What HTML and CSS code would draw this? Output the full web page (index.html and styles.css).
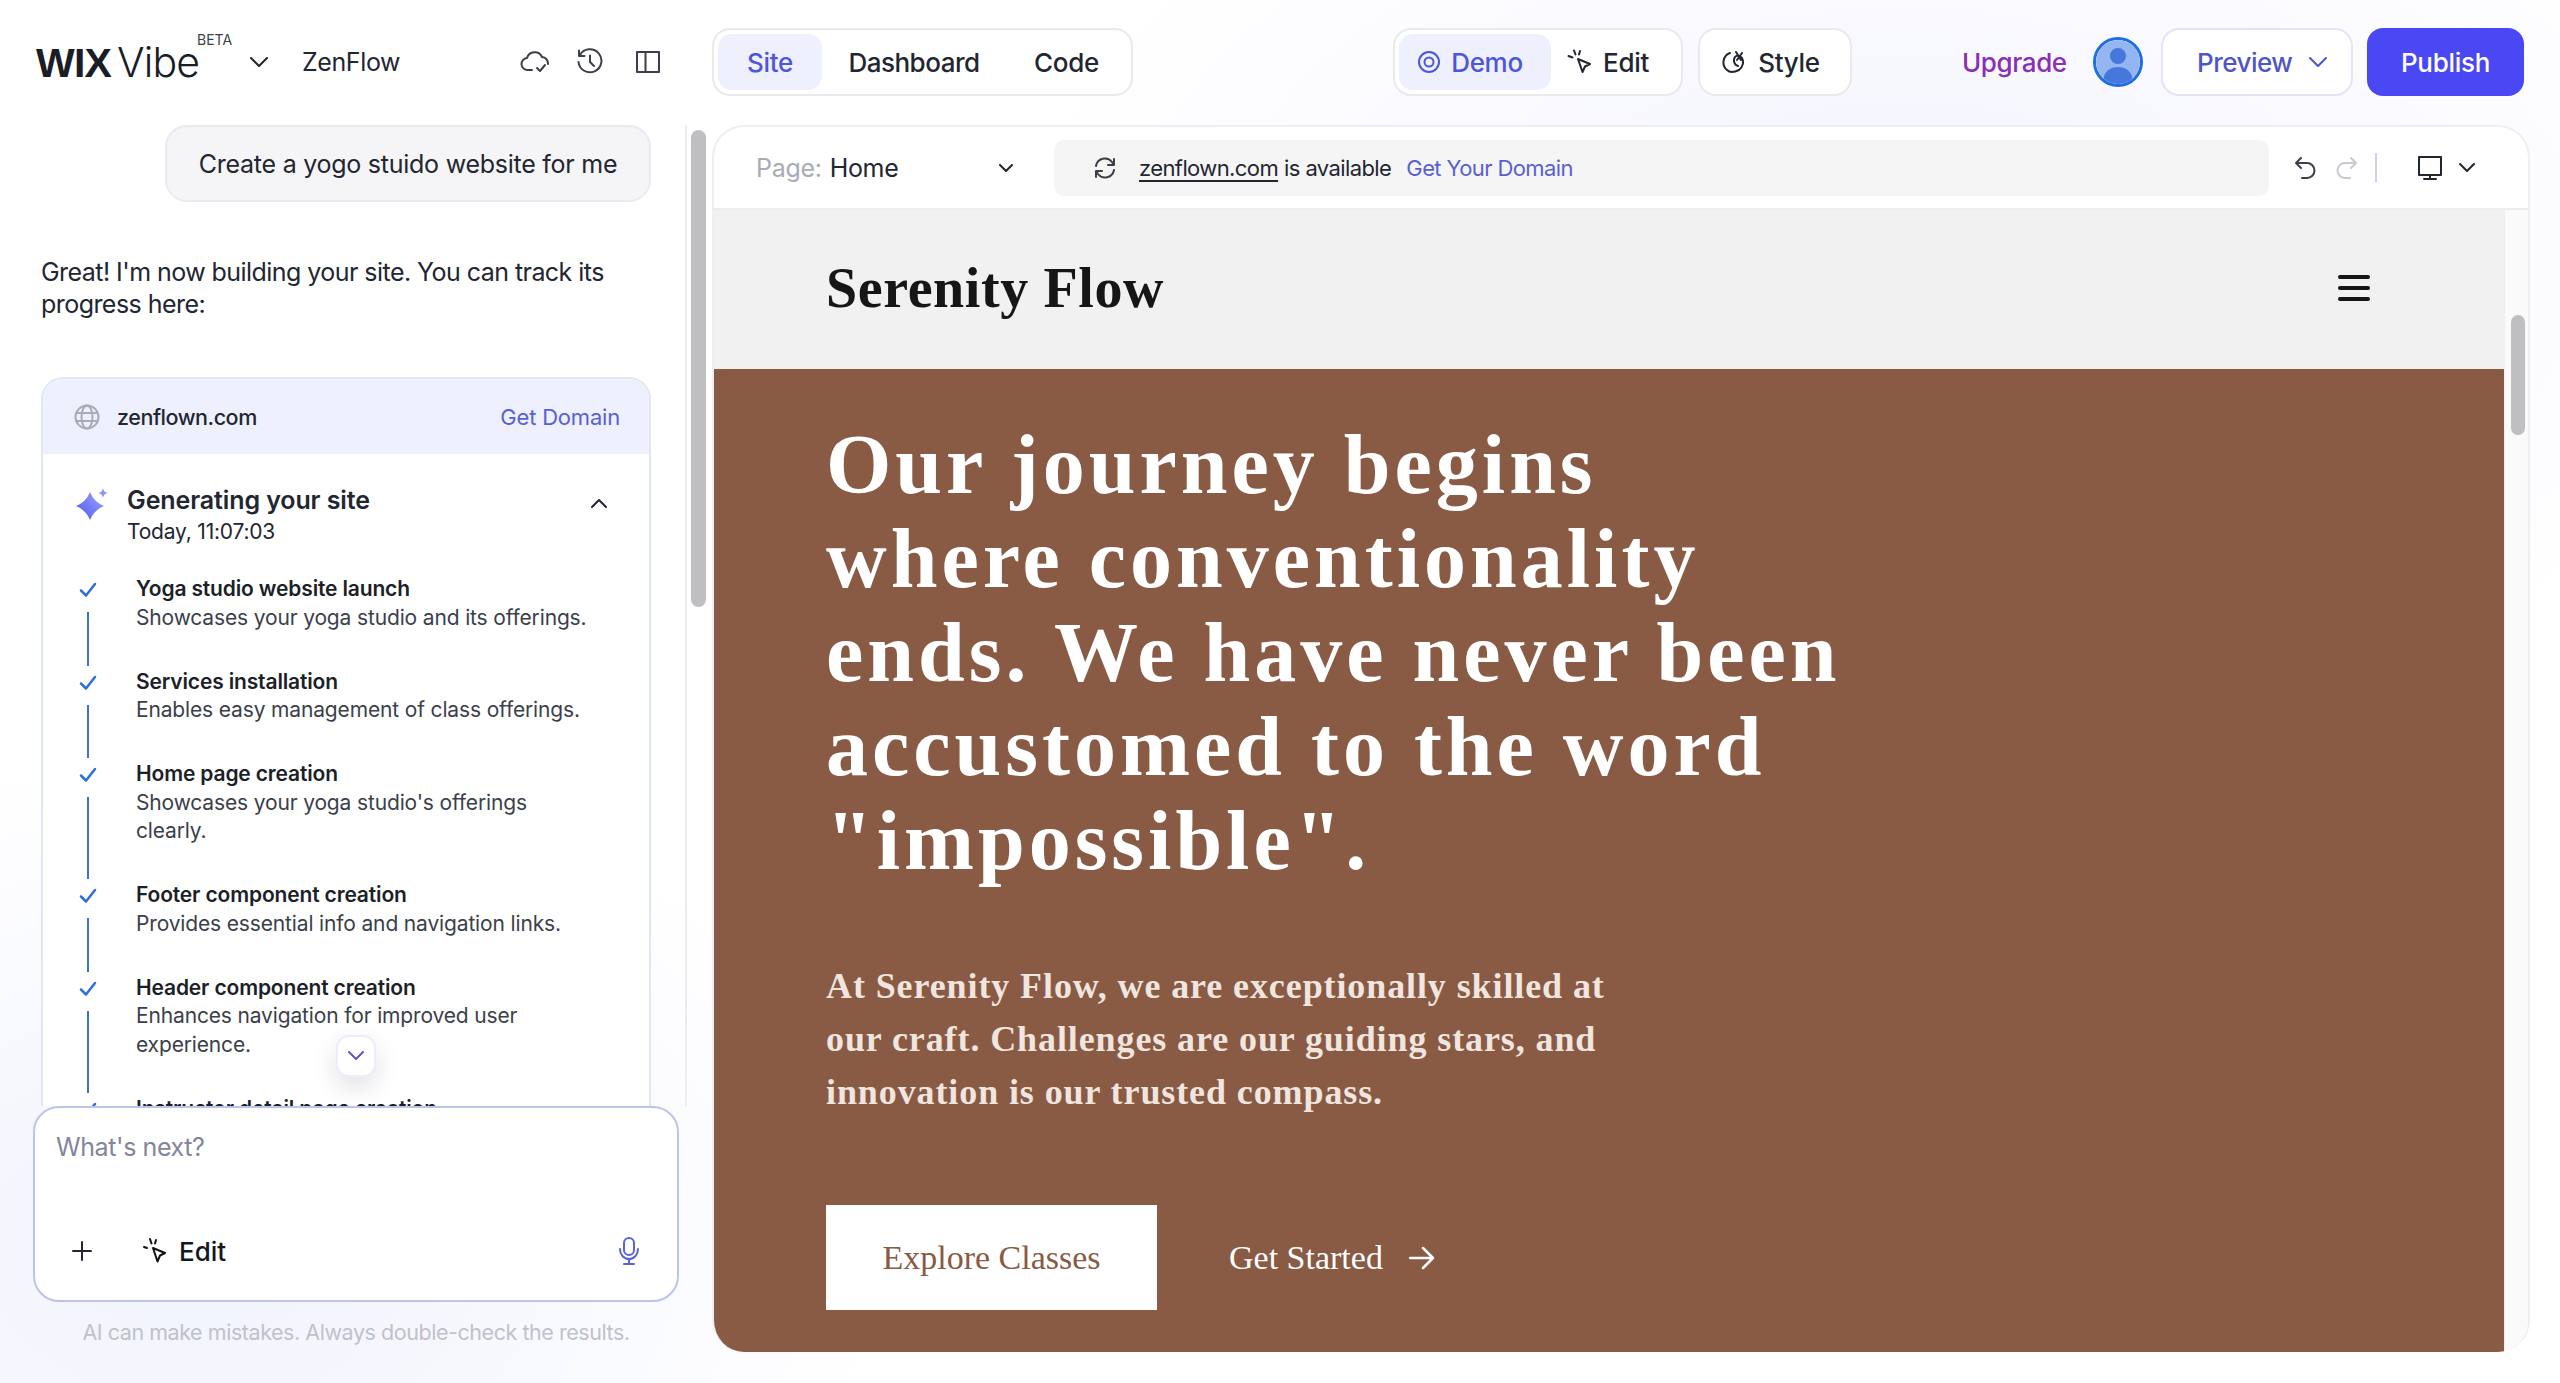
FILE: index.html
```html
<!DOCTYPE html>
<html lang="en">
  <head>
    <meta charset="UTF-8" />
    <meta name="viewport" content="width=device-width, initial-scale=1.0" />
    <title>ZenFlow - Wix Vibe</title>
    <link rel="stylesheet" href="styles.css">
  </head>

  <body>
    <header class="topbar">
      <div class="brand">
        <span class="logo-wix">WIX</span><span class="logo-vibe">Vibe</span><span class="logo-beta">BETA</span>
      </div>
      <svg class="brand-chevron" width="18" height="10" viewBox="0 0 18 10"><path d="M1 1l8 8 8-8" class="line" stroke="#222631" /></svg>
      <span class="project-name">ZenFlow</span>
      <div class="project-icons">
        <svg width="30" height="26" viewBox="0 0 30 26"><path d="M12 21H8a6 6 0 0 1-1-12 8 8 0 0 1 15-1 6.500 6.500 0 0 1 6 7" class="line" stroke="#3b3f4a" /><path d="M17 19l3 3 5-6" class="line" stroke="#3b3f4a" /></svg>
        <svg class="history-icon" width="28" height="28" viewBox="0 0 28 28"><path d="M4 7a11.500 11.500 0 1 1-1.500 7M3 2.500V8h5.500M14 7.500V14l4 4" class="line" stroke="#3b3f4a" /></svg>
        <svg width="24" height="24" viewBox="0 0 24 24"><path d="M1 2h22v20H1zM9.500 2v20" class="line" stroke="#3b3f4a" /></svg>
      </div>

      <nav class="pill-group tabs">
        <a class="pill-item active tab-site">Site</a>
        <a class="pill-item tab-dashboard">Dashboard</a>
        <a class="pill-item tab-code">Code</a>
      </nav>

      <div class="pill-group modes">
        <a class="pill-item active mode-demo">
          <svg width="24" height="24" viewBox="0 0 24 24"><circle cx="12" cy="12" r="10" class="line" stroke="#4f55d8" /><circle cx="12" cy="12" r="4.500" class="line" stroke="#4f55d8" /></svg>
          Demo
        </a>
        <a class="pill-item mode-edit">
          <svg width="26" height="26" viewBox="0 0 26 26"><path d="M11 10l12 5-5 2.500-2.500 5.500zM7 1.500l1.500 4M1.500 7l4 1.500M13 2l-1 3.500" class="line" stroke="#222631" /></svg>
          Edit
        </a>
      </div>

      <div class="pill-group style-group">
        <a class="pill-item style-btn">
          <svg width="26" height="26" viewBox="0 0 26 26"><path d="M8 4a10 10 0 0 0-3 17c3 3 8 2 12 0 4-3 5-8 3-12-2-3-5-3-7-1-2 3-1 8 3 9M14 3l5 8M20 4l-5 7" class="line" stroke="#222631" /></svg>
          Style
        </a>
      </div>

      <a class="upgrade">Upgrade</a>
      <div class="avatar">
        <svg width="44" height="44" viewBox="0 0 44 44"><circle cx="22" cy="22" r="22" fill="#93b6f2" /><circle cx="22" cy="16" r="8" fill="#4577dd" /><ellipse cx="22" cy="38" rx="14" ry="11" fill="#4577dd" /></svg>
      </div>
      <a class="preview-btn">
        Preview
        <svg width="18" height="10" viewBox="0 0 18 10"><path d="M1 1l8 8 8-8" class="line" stroke="#4f55c8" /></svg>
      </a>
      <a class="publish-btn">Publish</a>
    </header>

    <main class="workspace">
      <section class="chat-panel">
        <div class="chat-top">
          <div class="chat-log">
            <div class="user-row">
              <div class="user-bubble">Create a yogo stuido website for me</div>
            </div>
            <p class="assistant-msg">Great! I'm now building your site. You can track its progress here:</p>

            <div class="progress-card">
              <div class="card-head">
                <svg width="26" height="26" viewBox="0 0 26 26"><circle cx="13" cy="13" r="11.500" class="line" stroke="#a9abb5" /><ellipse cx="13" cy="13" rx="5.500" ry="11.500" class="line" stroke="#a9abb5" /><path d="M2.500 9h21M2.500 17h21" class="line" stroke="#a9abb5" /></svg>
                <span class="card-domain">zenflown.com</span>
                <a class="card-link">Get Domain</a>
              </div>

              <div class="gen-head">
                <svg class="sparkle" width="34" height="32" viewBox="0 0 34 32"><defs><linearGradient id="spark" x1="0" y1="1" x2="1" y2="0"><stop offset="0" stop-color="#4a56f0" /><stop offset="1" stop-color="#a0a8fa" /></linearGradient></defs><path d="M14 4Q18 14 28 18Q18 22 14 32Q10 22 0 18Q10 14 14 4z" fill="url(#spark)" /><path d="M27 0c.5 3 2 4.500 5 5-3 .5-4.500 2-5 5-.5-3-2-4.500-5-5 3-.5 4.500-2 5-5z" fill="#8d95f5" /></svg>
                <div class="gen-text">
                  <h3>Generating your site</h3>
                  <span>Today, 11:07:03</span>
                </div>
                <svg class="gen-chevron" width="16" height="10" viewBox="0 0 16 10"><path d="M1 9l7-7 7 7" class="line" stroke="#222631" /></svg>
              </div>

              <ul class="steps">
                <li class="step">
                  <div class="step-mark"><svg width="18" height="16" viewBox="0 0 18 16"><path d="M2 8.500l5 5L16 2" class="check" /></svg><i></i></div>
                  <div class="step-text"><b>Yoga studio website launch</b><span>Showcases your yoga studio and its offerings.</span></div>
                </li>
                <li class="step">
                  <div class="step-mark"><svg width="18" height="16" viewBox="0 0 18 16"><path d="M2 8.500l5 5L16 2" class="check" /></svg><i></i></div>
                  <div class="step-text"><b>Services installation</b><span>Enables easy management of class offerings.</span></div>
                </li>
                <li class="step">
                  <div class="step-mark"><svg width="18" height="16" viewBox="0 0 18 16"><path d="M2 8.500l5 5L16 2" class="check" /></svg><i></i></div>
                  <div class="step-text"><b>Home page creation</b><span>Showcases your yoga studio's offerings clearly.</span></div>
                </li>
                <li class="step">
                  <div class="step-mark"><svg width="18" height="16" viewBox="0 0 18 16"><path d="M2 8.500l5 5L16 2" class="check" /></svg><i></i></div>
                  <div class="step-text"><b>Footer component creation</b><span>Provides essential info and navigation links.</span></div>
                </li>
                <li class="step">
                  <div class="step-mark"><svg width="18" height="16" viewBox="0 0 18 16"><path d="M2 8.500l5 5L16 2" class="check" /></svg><i></i></div>
                  <div class="step-text"><b>Header component creation</b><span>Enhances navigation for improved user experience.</span></div>
                </li>
                <li class="step">
                  <div class="step-mark"><svg width="18" height="16" viewBox="0 0 18 16"><path d="M2 8.500l5 5L16 2" class="check" /></svg></div>
                  <div class="step-text"><b>Instructor detail page creation</b></div>
                </li>
              </ul>
            </div>

            <button class="scroll-down">
              <svg width="16" height="10" viewBox="0 0 16 10"><path d="M1 1l7 7 7-7" class="line" stroke="#5f58c4" /></svg>
            </button>
          </div>
          <div class="chat-scroll"><div class="chat-thumb"></div></div>
        </div>

        <div class="composer">
          <div class="composer-input">What's next?</div>
          <div class="composer-actions">
            <svg width="20" height="20" viewBox="0 0 20 20"><path d="M10 1v18M1 10h18" class="line" stroke="#222631" /></svg>
            <a class="composer-edit">
              <svg width="26" height="28" viewBox="0 0 26 28"><path d="M11 11l12 5-5 2.500-2.500 6z" class="line" stroke="#111" fill="none" /><path d="M8 2l1.500 4.500M2 10l3 1M14 3l-1 3.500" class="line" stroke="#111" /></svg>
              Edit
            </a>
            <svg class="mic" width="22" height="28" viewBox="0 0 22 28"><rect x="6" y="1" width="10" height="17" rx="5" class="line" stroke="#5a63d8" /><path d="M2 12c0 6 4 10 9 10s9-4 9-10M11 22v5M6 27h10" class="line" stroke="#5a63d8" /></svg>
          </div>
        </div>
        <p class="disclaimer">AI can make mistakes. Always double-check the results.</p>
      </section>

      <section class="preview-panel">
        <div class="preview-toolbar">
          <div class="page-select">
            <span class="page-label">Page:</span>
            <span class="page-name">Home</span>
            <svg width="14" height="8" viewBox="0 0 14 8"><path d="M1 1l6 6 6-6" class="line" stroke="#222631" /></svg>
          </div>
          <div class="url-bar">
            <svg width="22" height="24" viewBox="0 0 22 24"><path d="M2 10a9 9 0 0 1 16-4l2 3M20 14a9 9 0 0 1-16 4l-2-3M20 3v6h-6M2 21v-6h6" class="line" stroke="#3b3f4a" /></svg>
            <a class="url-domain">zenflown.com</a>
            <span class="url-status">is available</span>
            <a class="url-link">Get Your Domain</a>
          </div>
          <div class="view-tools">
            <svg width="22" height="22" viewBox="0 0 22 22"><path d="M7 1L2 6l5 5M2 6h11a7 7 0 0 1 0 15H8" class="line" stroke="#3b3f4a" /></svg>
            <svg class="redo" width="22" height="22" viewBox="0 0 22 22"><path d="M15 1l5 5-5 5M20 6H9a7 7 0 0 0 0 15h5" class="line" stroke="#c9cad0" /></svg>
            <i class="tool-sep"></i>
            <svg class="monitor" width="24" height="24" viewBox="0 0 24 24"><path d="M1 1h22v18H1zM12 19v4M6 23h12" class="line" stroke="#222631" /></svg>
            <svg width="16" height="10" viewBox="0 0 16 10"><path d="M1 1l7 7 7-7" class="line" stroke="#222631" /></svg>
          </div>
        </div>

        <div class="site-frame">
          <div class="site-page">
            <div class="site-nav">
              <span class="site-name">Serenity Flow</span>
              <div class="burger"><i></i><i></i><i></i></div>
            </div>
            <div class="site-hero">
              <h1>Our journey begins where conventionality ends. We have never been accustomed to the word "impossible".</h1>
              <p>At Serenity Flow, we are exceptionally skilled at our craft. Challenges are our guiding stars, and innovation is our trusted compass.</p>
              <div class="hero-actions">
                <a class="btn-explore">Explore Classes</a>
                <a class="btn-start">
                  Get Started
                  <svg width="26" height="24" viewBox="0 0 26 24"><path d="M1 12h23M14 2l10 10-10 10" class="hero-arrow" /></svg>
                </a>
              </div>
            </div>
          </div>
          <div class="site-scroll"><div class="site-thumb"></div></div>
        </div>
      </section>
    </main>
  </body>
</html>
```

FILE: styles.css
```css
* {
  box-sizing: border-box;
}

html,
body {
  margin: 0;
  height: 100%;
}

body {
  width: 2560px;
  height: 1383px;
  overflow: hidden;
  font-family: "Inter", "Liberation Sans", sans-serif;
  color: #222631;
  background:
    radial-gradient(900px 500px at 1900px 260px, #f3f4fe 0%, rgba(243, 244, 254, 0) 100%),
    radial-gradient(700px 500px at 200px 1250px, #f1f3fd 0%, rgba(241, 243, 253, 0) 100%),
    #ffffff;
}

a {
  text-decoration: none;
  color: inherit;
}

svg {
  display: block;
  flex-shrink: 0;
}

.line {
  fill: none;
  stroke-width: 2;
  stroke-linecap: round;
  stroke-linejoin: round;
}

/* top bar */
.topbar {
  display: flex;
  align-items: center;
  height: 125px;
  padding: 0 36px 1px 36px;
}

.brand {
  position: relative;
  display: flex;
  align-items: baseline;
  width: 214px;
  line-height: 48px;
  color: #1a1d26;
}

.logo-wix {
  font-family: "Liberation Sans", sans-serif;
  font-weight: 700;
  font-size: 41px;
  letter-spacing: -0.8px;
  margin-right: 6px;
}

.logo-vibe {
  font-size: 41px;
  font-weight: 300;
  letter-spacing: -0.9px;
}

.logo-beta {
  position: absolute;
  left: 161px;
  top: -7px;
  font-size: 14px;
  line-height: 18px;
  color: #3b3f4a;
}

.brand-chevron {
  margin-right: 34px;
}

.project-name {
  width: 218px;
  font-size: 25px;
  letter-spacing: -0.4px;
}

.project-icons {
  display: flex;
  align-items: center;
  gap: 26px;
  width: 192px;
}

.history-icon {
  margin-right: 6px;
}

.pill-group {
  display: flex;
  align-items: stretch;
  height: 68px;
  padding: 4px;
  border: 2px solid #e9e9ee;
  border-radius: 18px;
  background: #fff;
  font-size: 26px;
  font-weight: 500;
  letter-spacing: -0.3px;
}

.pill-item {
  display: flex;
  align-items: center;
  justify-content: center;
  gap: 10px;
  border-radius: 14px;
}

.pill-item.active {
  background: #eef0fd;
  color: #4f55d8;
}

.tabs {
  width: 421px;
  margin-right: 260px;
}

.tab-site {
  width: 104px;
}

.tab-dashboard {
  width: 184px;
  letter-spacing: -0.5px;
}

.tab-code {
  width: 121px;
}

.modes {
  width: 290px;
  margin-right: 15px;
}

.mode-demo {
  width: 152px;
  padding-right: 10px;
}

.mode-edit {
  flex: 1;
  padding-right: 12px;
}

.style-group {
  width: 154px;
  margin-right: 110px;
}

.style-btn {
  flex: 1;
  padding-right: 8px;
}

.upgrade {
  width: 131px;
  font-size: 26px;
  font-weight: 500;
  letter-spacing: -0.4px;
  color: #8a2fb5;
}

.avatar {
  display: flex;
  align-items: center;
  justify-content: center;
  width: 50px;
  height: 50px;
  margin-right: 18px;
  border: 3px solid #1f6fe0;
  border-radius: 50%;
  overflow: hidden;
}

.preview-btn {
  display: flex;
  align-items: center;
  justify-content: space-between;
  width: 192px;
  height: 68px;
  margin-right: 14px;
  padding: 0 24px 0 34px;
  border: 2px solid #e3e4f5;
  border-radius: 18px;
  background: #fff;
  font-size: 26px;
  font-weight: 500;
  letter-spacing: -0.5px;
  color: #4f55c8;
}

.publish-btn {
  display: flex;
  align-items: center;
  justify-content: center;
  width: 157px;
  height: 68px;
  border-radius: 16px;
  background: #4a48f5;
  color: #fff;
  font-size: 26px;
  font-weight: 500;
  letter-spacing: -0.3px;
}

/* main area */
.workspace {
  display: flex;
  height: 1227px;
}

.chat-panel {
  width: 712px;
  flex-shrink: 0;
}

.chat-top {
  display: flex;
  height: 981px;
}

.chat-log {
  position: relative;
  width: 685px;
  padding-left: 41px;
  padding-right: 34px;
  overflow: hidden;
}

.user-row {
  display: flex;
  justify-content: flex-end;
}

.user-bubble {
  display: flex;
  align-items: center;
  justify-content: center;
  width: 486px;
  height: 77px;
  border: 2px solid #eaebf0;
  border-radius: 22px;
  background: #f5f5f7;
  font-size: 25px;
  letter-spacing: -0.25px;
}

.assistant-msg {
  margin: 54px 0 57px 0;
  font-size: 25px;
  line-height: 32px;
  letter-spacing: -0.55px;
}

.progress-card {
  border: 2px solid #dfe6f8;
  border-bottom: none;
  border-radius: 22px 22px 0 0;
  background: #fff;
  height: 900px;
  overflow: hidden;
}

.card-head {
  display: flex;
  align-items: center;
  gap: 17px;
  height: 75px;
  padding: 0 29px 0 31px;
  background: #eef0fd;
}

.card-domain {
  flex: 1;
  font-size: 21.500px;
  font-weight: 500;
  letter-spacing: -0.45px;
}

.card-link {
  font-size: 22px;
  letter-spacing: -0.2px;
  color: #5a5fd0;
}

.gen-head {
  display: flex;
  padding: 29px 42px 0 33px;
  margin-bottom: 28px;
}

.sparkle {
  margin: 5px 17px 0 0;
}

.gen-text {
  flex: 1;
}

.gen-text h3 {
  margin: 0;
  font-size: 25px;
  line-height: 34px;
  font-weight: 600;
  letter-spacing: -0.1px;
}

.gen-text span {
  display: block;
  font-size: 21px;
  line-height: 30px;
  letter-spacing: -0.2px;
}

.gen-chevron {
  margin-top: 15px;
}

.steps {
  margin: 0;
  padding: 0 0 0 35px;
  list-style: none;
}

.step {
  display: flex;
}

.step-mark {
  display: flex;
  flex-direction: column;
  align-items: center;
  width: 20px;
  margin-right: 38px;
  padding-top: 7px;
}

.step-mark i {
  flex: 1;
  width: 2px;
  margin: 14px 0 2px 0;
  background: #3d72d1;
}

.check {
  fill: none;
  stroke: #2f6fdc;
  stroke-width: 2.500;
  stroke-linecap: round;
  stroke-linejoin: round;
}

.step-text {
  width: 460px;
  padding-bottom: 35.500px;
  font-size: 21px;
  line-height: 28.500px;
  letter-spacing: -0.15px;
}

.step-text b {
  display: block;
  font-weight: 600;
  color: #1c1f28;
}

.step-text span {
  display: block;
  color: #3b3f4a;
}

.scroll-down {
  position: absolute;
  left: 336px;
  top: 910px;
  display: flex;
  align-items: center;
  justify-content: center;
  width: 40px;
  height: 42px;
  padding: 0;
  border: 2px solid #eceefb;
  border-radius: 13px;
  background: #fff;
  box-shadow: 0 10px 24px rgba(40, 40, 70, 0.14);
}

.chat-scroll {
  width: 27px;
  border-left: 2px solid #ececef;
  padding: 5px 0 0 4px;
}

.chat-thumb {
  width: 15px;
  height: 477px;
  border-radius: 8px;
  background: #bfbfc1;
}

.composer {
  width: 646px;
  height: 196px;
  margin-left: 33px;
  padding: 24px 37px 0 21px;
  border: 2px solid #bcc4ec;
  border-radius: 26px;
  background: #fff;
}

.composer-input {
  height: 97px;
  font-size: 25px;
  line-height: 30px;
  letter-spacing: -0.4px;
  color: #83869a;
}

.composer-actions {
  display: flex;
  align-items: center;
  height: 44px;
  padding-left: 16px;
}

.composer-edit {
  display: flex;
  align-items: center;
  gap: 11px;
  margin-left: 50px;
  font-size: 26px;
  font-weight: 500;
  color: #15171f;
}

.mic {
  margin-left: auto;
}

.disclaimer {
  width: 646px;
  margin: 17px 0 0 33px;
  text-align: center;
  font-size: 21.500px;
  line-height: 26px;
  letter-spacing: -0.45px;
  color: #c0c2cb;
}

/* preview window */
.preview-panel {
  display: flex;
  flex-direction: column;
  width: 1818px;
  border-radius: 32px;
  border: 2px solid #eeeef4;
  border-bottom: none;
  background: #fff;
  overflow: hidden;
}

.preview-toolbar {
  display: flex;
  align-items: center;
  height: 83px;
  flex-shrink: 0;
  border-bottom: 2px solid #ededf0;
  padding: 0 0 0 42px;
}

.page-select {
  display: flex;
  align-items: center;
  width: 298px;
  padding-right: 41px;
  font-size: 25px;
  letter-spacing: -0.3px;
}

.page-label {
  margin-right: 8px;
  color: #a9abb5;
}

.page-name {
  flex: 1;
  font-weight: 400;
}

.url-bar {
  display: flex;
  align-items: center;
  width: 1215px;
  height: 56px;
  padding-left: 40px;
  border-radius: 10px;
  background: #f5f5f6;
  font-size: 22px;
  letter-spacing: -0.6px;
}

.url-domain {
  margin-left: 23px;
  text-decoration: underline;
  text-underline-offset: 4px;
}

.url-status {
  margin-left: 6px;
}

.url-link {
  margin-left: 15px;
  color: #5a5fd0;
}

.view-tools {
  display: flex;
  align-items: center;
  padding-left: 25px;
}

.redo {
  margin-left: 20px;
}

.tool-sep {
  width: 2px;
  height: 29px;
  margin: 0 41px 0 17px;
  background: #ccd0ea;
}

.monitor {
  margin-right: 17px;
}

.site-frame {
  display: flex;
  flex: 1;
  min-height: 0;
}

.site-page {
  flex: 1;
  overflow: hidden;
  font-family: "Liberation Serif", serif;
}

.site-nav {
  display: flex;
  align-items: center;
  justify-content: space-between;
  height: 159px;
  padding: 0 134px 3px 112px;
  background: #f1f1f1;
}

.site-name {
  font-size: 56px;
  font-weight: 700;
  letter-spacing: 0.6px;
  color: #161616;
}

.burger {
  display: flex;
  flex-direction: column;
  gap: 7px;
  width: 32px;
}

.burger i {
  height: 4px;
  border-radius: 2px;
  background: #161616;
}

.site-hero {
  height: 983px;
  padding: 49px 0 0 112px;
  background: #895a44;
  color: #fff;
}

.site-hero h1 {
  width: 1024px;
  margin: 0 0 72px 0;
  font-size: 84px;
  line-height: 94px;
  font-weight: 700;
  letter-spacing: 4px;
}

.site-hero p {
  width: 800px;
  margin: 0 0 86px 0;
  font-size: 36px;
  line-height: 53px;
  font-weight: 700;
  letter-spacing: 0.9px;
  color: #f0e5df;
}

.hero-actions {
  display: flex;
  align-items: center;
}

.btn-explore {
  display: flex;
  align-items: center;
  justify-content: center;
  width: 331px;
  height: 105px;
  margin-right: 72px;
  background: #fff;
  color: #895a44;
  font-size: 34px;
}

.btn-start {
  display: flex;
  align-items: center;
  gap: 26px;
  font-size: 34px;
  color: #fff;
}

.hero-arrow {
  fill: none;
  stroke: #fff;
  stroke-width: 2.500;
  stroke-linecap: round;
  stroke-linejoin: round;
}

.site-scroll {
  width: 24px;
  flex-shrink: 0;
  padding: 105px 0 0 6px;
  background: #fafafa;
  border-left: 1px solid #eeeeee;
}

.site-thumb {
  width: 14px;
  height: 120px;
  border-radius: 7px;
  background: #bfbfc1;
}
```
